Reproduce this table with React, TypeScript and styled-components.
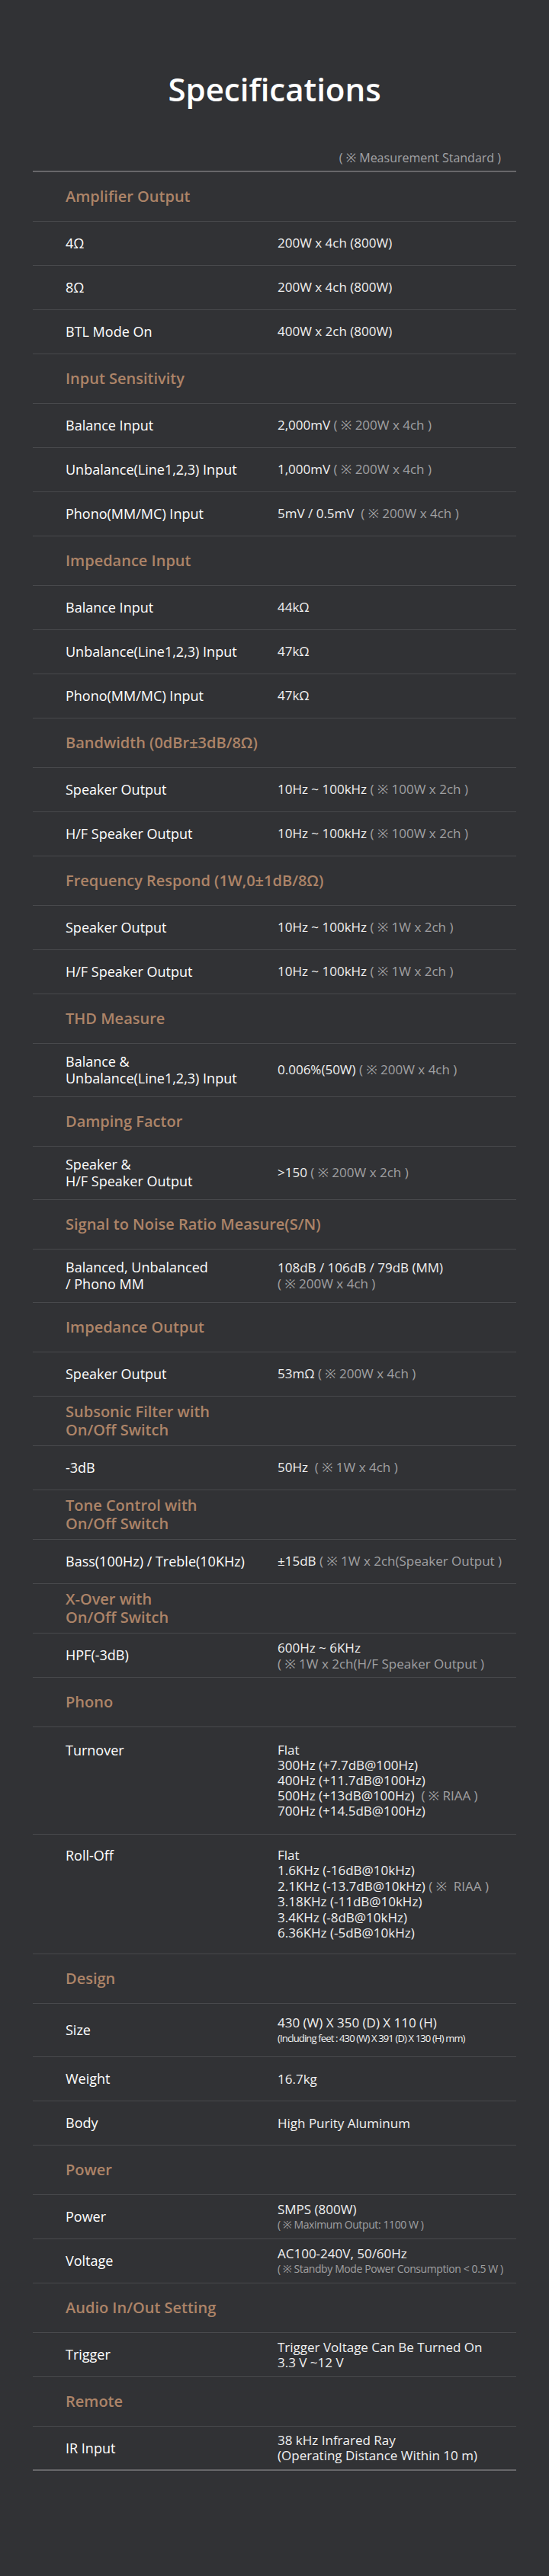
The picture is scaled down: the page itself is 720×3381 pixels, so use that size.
import React from 'react';
import styled, { createGlobalStyle } from 'styled-components';

const GlobalStyle = createGlobalStyle`
  body {
    margin: 0;
    background: #313235;
    font-family: 'Open Sans', 'Noto Sans', 'Liberation Sans', sans-serif;
  }
`;

const Page = styled.div`
  min-height: 3381px;
  box-sizing: border-box;
  padding: 93px 43px 135px;
  background: #313235;
`;

const Title = styled.h1`
  margin: 0;
  text-align: center;
  color: #ffffff;
  font-size: 42px;
  line-height: 48px;
  font-weight: 600;
`;

const Standard = styled.div`
  margin-top: 55px;
  padding-right: 20px;
  text-align: right;
  color: #a3a3a5;
  font-size: 16px;
  line-height: 22px;
`;

const Table = styled.div`
  margin-top: 6px;
  border-top: 2px solid #67676a;
`;

const SectionHead = styled.div`
  display: flex;
  align-items: center;
  box-sizing: border-box;
  min-height: 65px;
  padding: 8px 0 8px 43px;
  border-bottom: 1px solid #48494c;
  color: #ad8468;
  font-size: 20px;
  line-height: 24px;
  font-weight: 600;
`;

const Row = styled.div<{ $tall?: boolean; $top?: boolean; $pad?: number }>`
  display: grid;
  grid-template-columns: 278px 1fr;
  align-items: ${(p) => (p.$top ? 'start' : 'center')};
  box-sizing: border-box;
  min-height: ${(p) => (p.$tall ? 70 : 58)}px;
  padding: ${(p) => p.$pad ?? 0}px 0 ${(p) => p.$pad ?? 0}px 43px;
  border-bottom: 1px solid #48494c;

  &:last-child {
    border-bottom: 2px solid #67676a;
  }
`;

const Label = styled.div`
  color: #ffffff;
  font-size: 18px;
  line-height: 21.7px;
`;

const Value = styled.div<{ $lh?: number }>`
  color: #f0f0f0;
  font-size: 17px;
  line-height: ${(p) => p.$lh ?? 20.4}px;
`;

const Note = styled.span`
  color: #a0a0a2;
`;

const SmallNote = styled.div`
  color: #a0a0a2;
  font-size: 14px;
  line-height: 20px;
  letter-spacing: -0.4px;
  white-space: nowrap;
`;

const Fine = styled.div`
  font-size: 13px;
  line-height: 20px;
  letter-spacing: -0.85px;
  white-space: nowrap;
`;

type Item =
  | { head: string[] }
  | {
      label: React.ReactNode;
      value: React.ReactNode;
      tall?: boolean;
      top?: boolean;
      pad?: number;
      lh?: number;
    };

const lines = (arr: React.ReactNode[]) =>
  arr.map((l, i) => <div key={i}>{l}</div>);

const items: Item[] = [
  { head: ['Amplifier Output'] },
  { label: '4Ω', value: '200W x 4ch (800W)' },
  { label: '8Ω', value: '200W x 4ch (800W)' },
  { label: 'BTL Mode On', value: '400W x 2ch (800W)' },
  { head: ['Input Sensitivity'] },
  { label: 'Balance Input', value: <>2,000mV <Note>( ※ 200W x 4ch )</Note></> },
  { label: 'Unbalance(Line1,2,3) Input', value: <>1,000mV <Note>( ※ 200W x 4ch )</Note></> },
  { label: 'Phono(MM/MC) Input', value: <>5mV / 0.5mV&nbsp; <Note>( ※ 200W x 4ch )</Note></> },
  { head: ['Impedance Input'] },
  { label: 'Balance Input', value: '44kΩ' },
  { label: 'Unbalance(Line1,2,3) Input', value: '47kΩ' },
  { label: 'Phono(MM/MC) Input', value: '47kΩ' },
  { head: ['Bandwidth (0dBr±3dB/8Ω)'] },
  { label: 'Speaker Output', value: <>10Hz ~ 100kHz <Note>( ※ 100W x 2ch )</Note></> },
  { label: 'H/F Speaker Output', value: <>10Hz ~ 100kHz <Note>( ※ 100W x 2ch )</Note></> },
  { head: ['Frequency Respond (1W,0±1dB/8Ω)'] },
  { label: 'Speaker Output', value: <>10Hz ~ 100kHz <Note>( ※ 1W x 2ch )</Note></> },
  { label: 'H/F Speaker Output', value: <>10Hz ~ 100kHz <Note>( ※ 1W x 2ch )</Note></> },
  { head: ['THD Measure'] },
  {
    label: lines(['Balance &', 'Unbalance(Line1,2,3) Input']),
    value: <>0.006%(50W) <Note>( ※ 200W x 4ch )</Note></>,
    tall: true,
  },
  { head: ['Damping Factor'] },
  {
    label: lines(['Speaker &', 'H/F Speaker Output']),
    value: <>&gt;150 <Note>( ※ 200W x 2ch )</Note></>,
    tall: true,
  },
  { head: ['Signal to Noise Ratio Measure(S/N)'] },
  {
    label: lines(['Balanced, Unbalanced', '/ Phono MM']),
    value: lines(['108dB / 106dB / 79dB (MM)', <Note>( ※ 200W x 4ch )</Note>]),
    tall: true,
  },
  { head: ['Impedance Output'] },
  { label: 'Speaker Output', value: <>53mΩ <Note>( ※ 200W x 4ch )</Note></> },
  { head: ['Subsonic Filter with', 'On/Off Switch'] },
  { label: '-3dB', value: <>50Hz&nbsp; <Note>( ※ 1W x 4ch )</Note></> },
  { head: ['Tone Control with', 'On/Off Switch'] },
  {
    label: 'Bass(100Hz) / Treble(10KHz)',
    value: <>±15dB <Note>( ※ 1W x 2ch(Speaker Output )</Note></>,
  },
  { head: ['X-Over with', 'On/Off Switch'] },
  {
    label: 'HPF(-3dB)',
    value: lines(['600Hz ~ 6KHz', <Note>( ※ 1W x 2ch(H/F Speaker Output )</Note>]),
    lh: 21,
  },
  { head: ['Phono'] },
  {
    label: 'Turnover',
    value: lines([
      'Flat',
      '300Hz (+7.7dB@100Hz)',
      '400Hz (+11.7dB@100Hz)',
      <>500Hz (+13dB@100Hz)&nbsp; <Note>( ※ RIAA )</Note></>,
      '700Hz (+14.5dB@100Hz)',
    ]),
    top: true,
    pad: 20,
    lh: 20,
  },
  {
    label: 'Roll-Off',
    value: lines([
      'Flat',
      '1.6KHz (-16dB@10kHz)',
      <>2.1KHz (-13.7dB@10kHz) <Note>( ※&nbsp; RIAA )</Note></>,
      '3.18KHz (-11dB@10kHz)',
      '3.4KHz (-8dB@10kHz)',
      '6.36KHz (-5dB@10kHz)',
    ]),
    top: true,
    pad: 17,
  },
  { head: ['Design'] },
  {
    label: 'Size',
    value: lines([
      '430 (W) X 350 (D) X 110 (H)',
      <Fine>(Including feet : 430 (W) X 391 (D) X 130 (H) mm)</Fine>,
    ]),
    tall: true,
  },
  { label: 'Weight', value: '16.7kg' },
  { label: 'Body', value: 'High Purity Aluminum' },
  { head: ['Power'] },
  {
    label: 'Power',
    value: lines(['SMPS (800W)', <SmallNote>( ※ Maximum Output: 1100 W )</SmallNote>]),
  },
  {
    label: 'Voltage',
    value: lines([
      'AC100-240V, 50/60Hz',
      <SmallNote>( ※ Standby Mode Power Consumption &lt; 0.5 W )</SmallNote>,
    ]),
  },
  { head: ['Audio In/Out Setting'] },
  {
    label: 'Trigger',
    value: lines(['Trigger Voltage Can Be Turned On', '3.3 V ~12 V']),
  },
  { head: ['Remote'] },
  {
    label: 'IR Input',
    value: lines(['38 kHz Infrared Ray', '(Operating Distance Within 10 m)']),
  },
];

const App: React.FC = () => {
  return (
    <Page>
      <GlobalStyle />
      <Title>Specifications</Title>
      <Standard>( ※ Measurement Standard )</Standard>
      <Table>
        {items.map((item, i) =>
          'head' in item ? (
            <SectionHead key={i}>
              <div>{lines(item.head)}</div>
            </SectionHead>
          ) : (
            <Row key={i} $tall={item.tall} $top={item.top} $pad={item.pad}>
              <Label>{item.label}</Label>
              <Value $lh={item.lh}>{item.value}</Value>
            </Row>
          )
        )}
      </Table>
    </Page>
  );
};

export default App;
